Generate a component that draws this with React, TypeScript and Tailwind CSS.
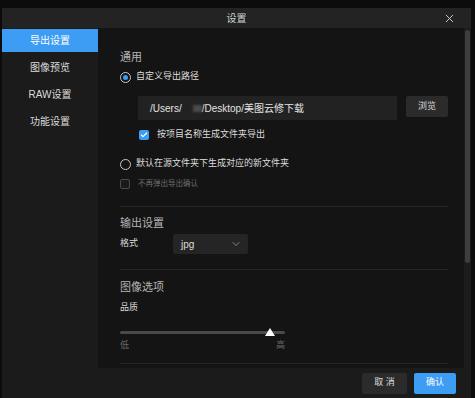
import { X, Check, ChevronDown } from 'lucide-react';

const NAV = ['导出设置', '图像预览', 'RAW设置', '功能设置'];

function Radio({ checked }: { checked?: boolean }) {
  return (
    <span className="w-[11px] h-[11px] rounded-full border-[1.5px] border-[#c8c8c8] flex items-center justify-center shrink-0">
      {checked && <span className="w-[5px] h-[5px] rounded-full bg-[#3d9cf3]" />}
    </span>
  );
}

function Divider({ className = '' }: { className?: string }) {
  return <div className={`h-px bg-[#262626] ${className}`} />;
}

export default function App() {
  return (
    <div className="w-[475px] h-[398px] bg-[#0c0c0c] flex flex-col overflow-hidden font-['Liberation_Sans','Noto_Sans_CJK_SC',sans-serif]">
      <div className="h-[8px] shrink-0" />
      <div className="flex-1 min-h-0 flex flex-col ml-[2px] mr-[4px] bg-[#141414]">
        {/* title */}
        <div className="h-[20px] shrink-0 bg-[#232323] relative flex items-center justify-center text-[10px] text-[#cfcfcf]">
          设置
          <X size={13} strokeWidth={1.75} className="absolute right-[15px] top-[4px] text-[#d0d0d0]" />
        </div>

        <div className="flex-1 min-h-0 flex">
          {/* sidebar */}
          <div className="w-[96px] shrink-0 bg-[#1b1b1b] flex flex-col gap-[4px] pt-[1px]">
            {NAV.map((n, i) => (
              <div
                key={n}
                className={`h-[23px] flex items-center justify-center text-[10px] ${
                  i === 0 ? 'bg-[#3d9cf3] text-white' : 'text-[#dcdcdc]'
                }`}
              >
                {n}
              </div>
            ))}
          </div>

          {/* content */}
          <div className="flex-1 min-w-0 flex flex-col pl-[22px] pr-[16px] pt-[21px] overflow-hidden">
            <div className="h-[16px] flex items-center text-[11px] text-[#b4b4b4]">通用</div>

            <div className="mt-[5px] h-[14px] flex items-center gap-[5px] text-[9px] text-[#dedede]">
              <Radio checked />
              自定义导出路径
            </div>

            <div className="mt-[12px] h-[24px] flex items-start ml-[18px] gap-[9px]">
              <div className="w-[259px] h-[24px] bg-[#222222] flex items-center pl-[12px] text-[10px] text-[#e2e2e2] whitespace-nowrap">
                /Users/
                <span className="inline-block w-[11px]" />
                <span className="inline-block w-[9px] h-[7px] bg-[#4a4a4a] blur-[1px]" />
                /Desktop/美图云修下载
              </div>
              <div className="w-[42px] h-[21px] bg-[#2b2b2b] rounded-[2px] flex items-center justify-center text-[9px] text-[#dcdcdc]">
                浏览
              </div>
            </div>

            <div className="mt-[8px] h-[14px] flex items-center ml-[19px] gap-[8px] text-[9px] text-[#dcdcdc]">
              <span className="w-[10px] h-[10px] rounded-[2px] bg-[#3d9cf3] flex items-center justify-center">
                <Check size={8} strokeWidth={3.5} className="text-white" />
              </span>
              按项目名称生成文件夹导出
            </div>

            <div className="mt-[15px] h-[14px] flex items-center gap-[5px] text-[9px] text-[#dedede]">
              <Radio />
              默认在源文件夹下生成对应的新文件夹
            </div>

            <div className="mt-[7px] h-[12px] flex items-center gap-[8px] text-[7.5px] text-[#6e6e6e]">
              <span className="w-[10px] h-[10px] rounded-[2px] border border-[#4a4a4a] bg-[#1a1a1a]" />
              不再弹出导出确认
            </div>

            <Divider className="mt-[16px]" />

            <div className="mt-[8px] h-[16px] flex items-center text-[11px] text-[#b4b4b4]">输出设置</div>

            <div className="mt-[3px] h-[20px] flex items-center text-[9px] text-[#dcdcdc]">
              <span className="w-[53px]">格式</span>
              <div className="w-[75px] h-[20px] bg-[#252525] rounded-[2px] flex items-center justify-between pl-[8px] pr-[6px] text-[10px] text-[#dcdcdc]">
                jpg
                <ChevronDown size={12} strokeWidth={1.5} className="text-[#a8a8a8]" />
              </div>
            </div>

            <Divider className="mt-[15px]" />

            <div className="mt-[9px] h-[16px] flex items-center text-[11px] text-[#b4b4b4]">图像选项</div>

            <div className="mt-[6px] h-[14px] flex items-center text-[9px] text-[#dcdcdc]">品质</div>

            <div className="mt-[13px] w-[165px] h-[8px] relative flex items-center">
              <div className="w-full h-[3px] rounded-full bg-[#4a4a4a]" />
              <div className="absolute left-[145px] top-0 w-0 h-0 border-l-[5px] border-r-[5px] border-b-[8px] border-l-transparent border-r-transparent border-b-white" />
            </div>

            <div className="mt-[4px] w-[165px] h-[12px] flex items-center justify-between text-[9px] text-[#6a6a6a]">
              <span>低</span>
              <span>高</span>
            </div>

            <Divider className="mt-[11px]" />
          </div>

          {/* scrollbar */}
          <div className="w-[7px] shrink-0 bg-[#1c1c1c] pt-[2px] px-[1px]">
            <div className="h-[233px] rounded-full bg-[#3e3e3e]" />
          </div>
        </div>

        {/* footer */}
        <div className="h-[30px] shrink-0 bg-[#1b1b1b] flex items-center justify-end gap-[7px] pr-[15px]">
          <div className="w-[45px] h-[21px] bg-[#2b2b2b] rounded-[2px] flex items-center justify-center text-[9px] text-[#dcdcdc]">
            取 消
          </div>
          <div className="w-[42px] h-[21px] bg-[#3d9cf3] rounded-[2px] flex items-center justify-center text-[9px] text-white">
            确认
          </div>
        </div>
      </div>
    </div>
  );
}
